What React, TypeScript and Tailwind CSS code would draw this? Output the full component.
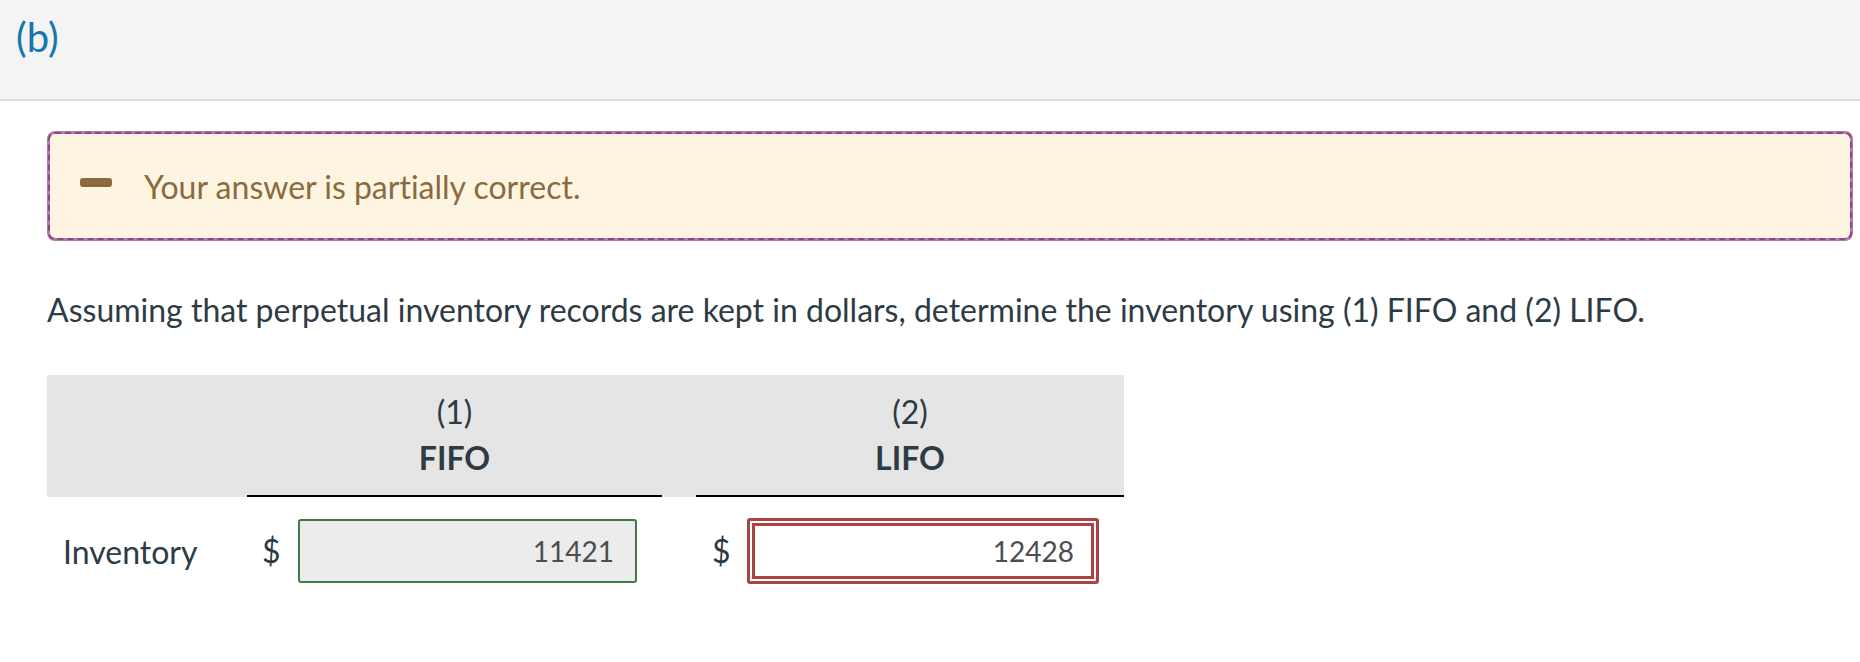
import React from "react";

export default function App() {
  return (
    <div className="w-[1860px] h-[662px] bg-white font-['Lato','Noto_Sans',sans-serif] text-[#2d3b45] overflow-hidden [font-variant-ligatures:none]">
      <div className="h-[101px] bg-[#f4f4f4] border-b-2 border-[#dcdcdc] pl-[16px] pt-[15px]">
        <span className="text-[40px] leading-[44px] text-[#1478ae]">(b)</span>
      </div>
      <div className="pl-[47px] pr-[7px]">
        <div className="mt-[30px] rounded-[8px] bg-[#b07ab3] p-[1px]">
          <div className="h-[108px] rounded-[7px] border-2 border-dashed border-[#8c4a7c] bg-[#fdf5e2] bg-clip-padding flex items-center">
            <div className="ml-[30px] w-[32px] h-[9px] rounded-[3px] bg-[#8b6b3d] -mt-[8px]" />
            <div className="ml-[32px] mt-[2px] text-[32px] leading-[38px] text-[#8b6b3d]">Your answer is partially correct.</div>
          </div>
        </div>
        <p className="mt-[50px] text-[32px] leading-[38px]">
          Assuming that perpetual inventory records are kept in dollars, determine the inventory using (1) FIFO and (2) LIFO.
        </p>
        <div className="mt-[46px] w-[1077px]">
          <div className="grid grid-cols-[200px_415px_34px_428px] h-[122px] bg-[#e5e5e5]">
            <div />
            <div className="border-b-2 border-black flex flex-col items-center justify-center text-[32px] leading-[46px] font-bold">
              <span className="font-normal">(1)</span>
              <span>FIFO</span>
            </div>
            <div />
            <div className="border-b-2 border-black flex flex-col items-center justify-center text-[32px] leading-[46px] font-bold">
              <span className="font-normal">(2)</span>
              <span>LIFO</span>
            </div>
          </div>
          <div className="grid grid-cols-[200px_415px_34px_428px] pt-[21px] text-[32px] leading-[38px]">
            <div className="pl-[16px] flex items-center pt-[2px]">Inventory</div>
            <div className="flex items-center pl-[15px] pr-[25px]">
              <span className="w-[36px]">$</span>
              <input
                readOnly
                value="11421"
                className="w-[339px] h-[64px] rounded-[3px] border-2 border-[#3f7b45] bg-[#ececec] text-right pr-[21px] text-[28px] text-[#4d4d4d] font-['Lato',sans-serif] outline-none"
              />
            </div>
            <div />
            <div className="flex items-center pl-[16px] pr-[25px]">
              <span className="w-[35px]">$</span>
              <div className="w-[352px] h-[66px] rounded-[3px] border-[3px] border-[#a94442] bg-white p-[2px]">
                <input
                  readOnly
                  value="12428"
                  className="w-full h-full border-[3px] border-[#a94442] bg-white text-right pr-[17px] text-[28px] text-[#4d4d4d] font-['Lato',sans-serif] outline-none"
                />
              </div>
            </div>
          </div>
        </div>
      </div>
    </div>
  );
}
